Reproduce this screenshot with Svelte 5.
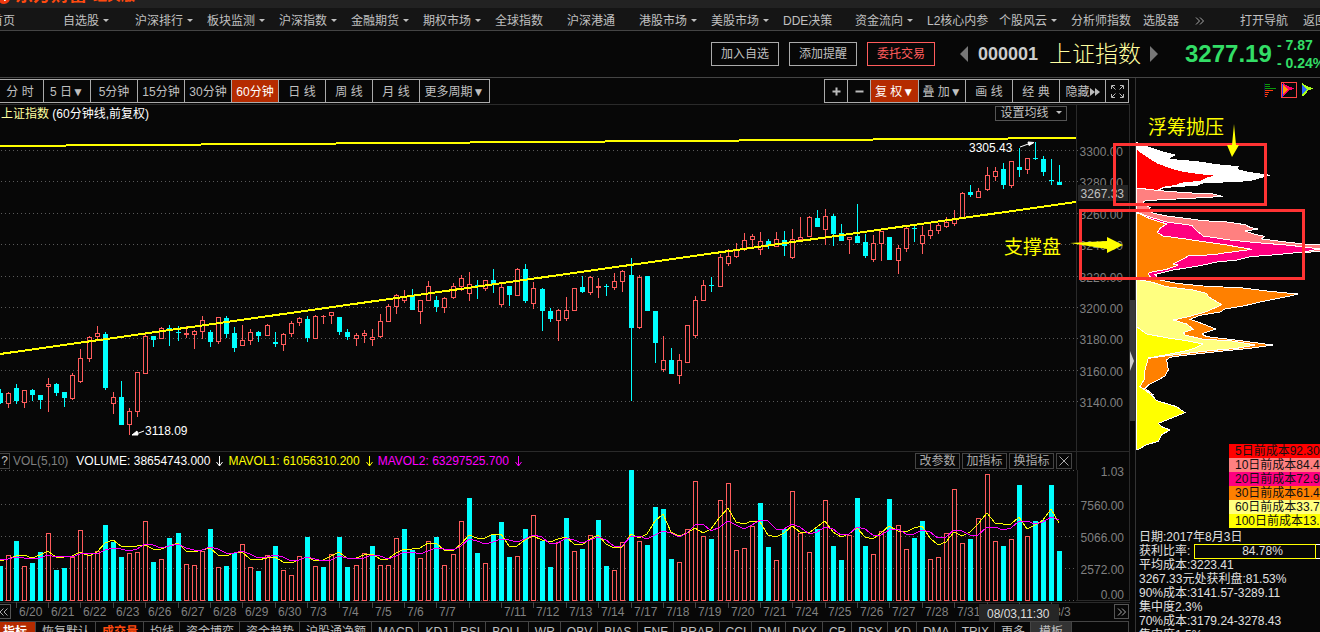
<script lang="ts">
  type Candle = { x: number; up: boolean; high: number; top: number; bottom: number; low: number; vol: number };

  const BASELINE = 601;

  const menu = [
    { label: "自选股", arrow: true },
    { label: "沪深排行", arrow: true },
    { label: "板块监测", arrow: true },
    { label: "沪深指数", arrow: true },
    { label: "金融期货", arrow: true },
    { label: "期权市场", arrow: true },
    { label: "全球指数" },
    { label: "沪深港通" },
    { label: "港股市场", arrow: true },
    { label: "美股市场", arrow: true },
    { label: "DDE决策" },
    { label: "资金流向", arrow: true },
    { label: "L2核心内参" },
    { label: "个股风云", arrow: true },
    { label: "分析师指数" }
  ];

  const periods = ["分 时", "5 日▼", "5分钟", "15分钟", "30分钟", "60分钟", "日 线", "周 线", "月 线"];
  const indicators = [
    "恢复默认", "成交量", "均线", "资金博弈", "资金趋势", "沪股通净额", "MACD", "KDJ", "RSI", "BOLL", "WR", "OBV",
    "BIAS", "ENE", "BRAR", "CCI", "DMI", "DKX", "CR", "PSY", "KD", "DMA", "TRIX", "更多", "模板"
  ];

  let period = $state("60分钟");
  let indicator = $state("成交量");

  // direction, high, body top, body bottom, low, volume top
  const rows = `d 389 393 403 404 566|u 392 393 404 408 555|d 384 388 401 404 541|u 390 390 403 408 566
d 389 390 395 401 563|d 395 395 400 409 552|u 378 384 387 412 533|d 383 384 393 396 570
d 392 392 398 407 568|u 373 375 399 400 557|u 349 358 382 383 530|u 336 337 359 362 553
u 326 333 337 340 551|d 332 334 388 390 525|u 392 397 404 414 542|d 381 397 425 425 557
u 408 411 425 435 553|u 372 372 412 417 552|u 332 336 374 374 521|d 336 336 340 347 562
u 327 328 339 339 559|d 325 328 329 346 538|d 326 332 333 341 533|u 326 333 335 338 564
u 330 331 335 349 565|u 316 320 332 339 551|d 330 332 342 347 529|u 317 317 342 344 567
d 316 318 334 338 566|d 327 333 348 352 553|u 325 340 346 346 544|u 329 332 341 345 567
d 331 332 336 342 571|u 324 325 336 336 555|d 332 342 344 347 546|u 333 334 345 351 570
u 321 323 334 337 575|u 317 318 323 326 556|d 316 319 338 342 537|u 315 316 339 339 566
u 315 316 317 324 567|u 312 312 316 324 554|d 317 317 332 335 537|d 329 332 337 340 567
u 333 335 339 346 565|u 330 333 336 343 553|u 329 337 340 346 546|u 314 321 337 338 565
u 304 306 322 322 565|u 294 295 307 314 538|u 290 296 301 303 529|d 289 296 310 310 550
u 300 300 312 324 558|u 281 286 301 301 541|d 296 300 307 312 537|u 297 298 308 313 565
u 283 286 298 299 554|u 275 278 287 291 521|u 272 284 294 301 498|d 280 285 286 299 553
u 280 280 289 291 563|d 269 280 285 293 534|u 283 287 305 307 522|d 286 286 295 306 557
u 268 269 296 296 556|d 264 269 301 303 529|u 282 288 304 309 515|d 288 289 311 331 541
d 308 311 319 322 567|u 309 310 321 341 542|u 297 310 319 321 518|u 288 288 311 311 551
d 276 287 292 293 549|u 276 277 293 295 535|u 278 286 288 298 520|d 284 286 287 296 566
u 273 281 288 290 570|u 270 271 282 292 542|d 258 275 328 401 470|u 275 277 328 329 541
d 276 276 311 311 545|d 311 311 343 363 507|u 336 360 370 372 509|d 348 360 374 374 559
u 354 360 376 384 562|u 325 325 363 363 529|u 296 300 336 338 481|u 280 285 301 301 536
d 277 285 286 292 539|u 254 257 287 287 500|u 249 256 264 266 483|u 243 250 257 258 550
u 233 240 250 251 548|u 234 236 240 247 526|u 232 241 250 255 503|d 239 241 245 249 547
u 232 239 247 247 560|d 231 240 246 256 529|u 229 239 258 259 491|u 217 237 240 240 533
u 216 217 237 237 552|d 210 218 227 227 529|u 209 216 230 245 500|d 214 216 234 246 546
d 224 233 241 241 560|u 237 237 240 254 535|d 204 236 243 243 498|d 234 242 256 258 546
u 235 243 260 262 554|u 231 231 244 261 531|d 237 237 260 260 499|u 245 248 261 274 525
u 226 228 249 252 549|d 225 228 229 242 538|u 226 235 244 254 521|u 223 230 236 239 559
u 223 225 231 234 557|u 217 222 227 228 533|u 210 219 224 226 489|u 192 193 218 218 543
d 185 192 195 197 539|u 188 191 198 198 518|u 167 175 190 191 474|u 167 171 177 181 541
d 163 169 185 189 546|u 161 161 186 188 539|d 148 167 170 177 485|u 158 158 170 174 536
d 142 158 159 160 521|d 156 159 172 176 520|d 159 180 181 185 485|d 165 182 185 185 551`;

  // bars that closed up on the candle but count as selling volume
  const sellVolume = new Set([14, 40, 46, 50, 58, 62, 70, 74, 82, 94, 114]);

  const candles: Candle[] = rows.split(/[|\n]/).map((row, i) => {
    const [dir, high, top, bottom, low, vol] = row.trim().split(" ");
    return { x: Math.floor(8.0897 * i + 0.06), up: dir === "u", high: +high, top: +top, bottom: +bottom, low: +low, vol: +vol };
  });

  // bars left of the visible range, needed by the moving averages
  const history = [44, 44, 44, 44, 44, 36, 47, 28, 54];

  function average(span: number) {
    const all = [...history, ...candles.map((c) => BASELINE - c.vol)];
    return candles
      .map((c, i) => {
        const end = i + history.length + 1;
        const sum = all.slice(end - span, end).reduce((a, b) => a + b, 0);
        return `${c.x},${Math.round(BASELINE - sum / span)}`;
      })
      .join(" ");
  }

  const ma5 = average(5);
  const ma10 = average(10);

  const priceAxis = [
    [150, "3300.00"], [181, "3280.00"], [213, "3260.00"], [244, "3240.00"], [276, "3220.00"],
    [307, "3200.00"], [338, "3180.00"], [370, "3160.00"], [401, "3140.00"]
  ] as const;
  const volAxis = [[471, "1.03"], [505, "7560.00"], [537, "5066.00"], [569, "2572.00"], [594, "0.00"]] as const;
  const volGrid = [470, 504, 536, 568, 600];

  const dates = [
    "6/20", "6/21", "6/22", "6/23", "6/26", "6/27", "6/28", "6/29", "6/30", "7/3", "7/4", "7/5", "7/6", "7/7", "",
    "7/11", "7/12", "7/13", "7/14", "7/17", "7/18", "7/19", "7/20", "7/21", "7/24", "7/25", "7/26", "7/27", "7/28",
    "7/31", "", "", "8/3"
  ].map((label, i) => ({ label, x: candles[2 + i * 4].x }));

  const costs = [
    { text: "5日前成本92.30%", color: "#ff0000" },
    { text: "10日前成本84.40%", color: "#ff8080" },
    { text: "20日前成本72.93%", color: "#ff0080" },
    { text: "30日前成本61.49%", color: "#ff8000" },
    { text: "60日前成本33.70%", color: "#ffff80" },
    { text: "100日前成本13.91%", color: "#ffff00" }
  ];

  const chips = [
    { color: "#ffffff", points: "200,38 215,42 235,52 262,60 285,68 316,75 300,82 298,88 380,95 440,104 505,110 500,118 540,128 600,136 575,142 540,152 460,156 400,158 380,166 310,170 280,174 265,180 200,180" },
    { color: "#ff0000", points: "200,58 225,75 260,98 305,115 330,122 380,130 440,136 415,143 390,154 330,160 320,166 280,172 265,180 200,180" },
    { color: "#ff8080", points: "200,174 270,182 345,188 430,192 458,199 400,203 320,207 240,211 220,214 225,225 240,233 235,240 250,250 290,258 340,264 400,272 470,276 525,284 540,292 565,297 525,303 555,313 583,319 575,327 640,335 700,342 770,346 770,362 700,368 200,380" },
    { color: "#ff0080", points: "200,246 230,258 290,276 365,286 380,302 400,318 480,330 560,338 660,346 750,357 700,366 620,374 540,380 500,390 440,396 400,405 360,412 310,420 270,430 255,433 262,442 200,446" },
    { color: "#ff8000", points: "200,248 240,266 290,282 270,295 262,308 280,318 340,326 400,335 470,345 545,358 470,368 430,374 355,378 330,392 310,402 325,405 290,418 250,425 235,430 240,440 270,450 320,460 400,468 520,474 590,483 683,492 660,498 600,510 570,516 520,528 460,538 455,545 390,556 360,568 400,582 437,597 410,606 395,612 410,620 480,628 540,636 608,645 540,655 450,664 350,675 300,682 290,690 295,720 285,738 255,755 235,765 225,775 250,795 200,800" },
    { color: "#ffff80", points: "200,448 240,455 290,470 370,480 410,490 415,500 455,524 410,545 355,560 310,570 350,582 370,598 340,608 345,615 400,628 480,632 556,645 500,655 420,662 350,670 270,680 230,686 200,700" },
    { color: "#ffff00", points: "200,590 230,612 300,625 350,632 398,642 380,652 350,662 290,674 235,684 225,720 222,750 210,770 225,780 245,795 260,812 320,830 345,848 310,862 265,880 275,890 300,900 275,914 265,934 230,944 205,958 200,958" }
  ];

  const stats = ["平均成本:3223.41", "3267.33元处获利盘:81.53%", "90%成本:3141.57-3289.11", "集中度2.3%", "70%成本:3179.24-3278.43", "集中度1.5%"];

  function isVolUp(candle: Candle, index: number) {
    return candle.up && !sellVolume.has(index);
  }
</script>

{#snippet downArrow(color: string)}
  <svg class="down" width="8" height="12" viewBox="0 0 8 12" stroke={color} fill="none"><path d="M4.5 1v10M1.5 7l3 4 3-4" /></svg>
{/snippet}

<div class="app">
  <div class="titlebar">
    <svg width="11" height="8" viewBox="0 0 11 8"><circle cx="4" cy="-2" r="6" fill="#f03a10" /><path d="M4 -3l2 4h-2z" fill="#fff" /></svg>
    <b>东方财富</b><b class="edition">经典版</b>
  </div>

  <nav class="menu">
    <a class="home" href="#home">首页</a>
    {#each menu as item}
      <a class="entry" href="#menu">{item.label}{#if item.arrow}<i class="caret"></i>{/if}</a>
    {/each}
    <a class="picker" href="#picker">选股器</a>
    <a class="more" href="#more" aria-label="更多">
      <svg width="10" height="8" viewBox="0 0 10 8" fill="none" stroke="#aaa"><path d="M1 0.5l3.5 3.5L1 7.5M5 0.5l3.5 3.5L5 7.5" /></svg>
    </a>
    <a class="guide" href="#guide">打开导航</a>
    <a href="#back">返回</a>
  </nav>

  <header class="quote">
    <button class="action">加入自选</button>
    <button class="action">添加提醒</button>
    <button class="action trade">委托交易</button>
    <button class="step" aria-label="上一个"><svg width="8" height="16" viewBox="0 0 8 16"><path d="M8 0v16L0 8z" fill="#777" /></svg></button>
    <span class="code">000001</span>
    <span class="name">上证指数</span>
    <button class="step" aria-label="下一个"><svg width="8" height="16" viewBox="0 0 8 16"><path d="M0 0v16l8-8z" fill="#777" /></svg></button>
    <span class="price">3277.19</span>
    <span class="change"><span>- 7.87</span><span>- 0.24%</span></span>
  </header>

  <main class="body">
    <section class="charts">
      <div class="toolbar">
        <div class="group periods">
          {#each periods as item}
            <button class:active={period === item} onclick={() => (period = item)}>{item}</button>
          {/each}
          <button class="wide">更多周期▼</button>
        </div>
        <div class="group tools">
          <button class="small" aria-label="放大"><svg width="9" height="9" viewBox="0 0 9 9"><path d="M0.5 4.5h8M4.5 0.5v8" stroke="#bbb" stroke-width="2" /></svg></button>
          <button class="small" aria-label="缩小"><svg width="9" height="9" viewBox="0 0 9 9"><path d="M0.5 4.5h8" stroke="#bbb" stroke-width="2" /></svg></button>
          <button class="active adjust">复 权▼</button>
          <button>叠 加▼</button>
          <button>画 线</button>
          <button>经 典</button>
          <button class="hide">隐藏<svg width="10" height="8" viewBox="0 0 10 8"><path d="M0 0l5 4-5 4zM5 0l5 4-5 4z" fill="#bbb" /></svg></button>
          <button class="full" aria-label="全屏"><svg width="13" height="13" viewBox="0 0 13 13" fill="none" stroke="#bbb"><path d="M0.5 4V0.5H4M9 0.5h3.5V4M12.5 9v3.5H9M4 12.5H0.5V9M1 1l3.5 3.5M12 1L8.5 4.5M12 12L8.5 8.5M1 12l3.5-3.5" /></svg></button>
        </div>
      </div>

      <div class="caption">
        <div class="caption-main">
          <span><span class="index-name">上证指数</span> (60分钟线,前复权)</span>
          <button class="ma">设置均线<i class="caret"></i></button>
        </div>
        <div class="gutter"></div>
      </div>

      <svg class="plot" viewBox="0 122 1130 329" role="img" aria-label="60分钟K线图">
        <g shape-rendering="crispEdges">
          <path d="M1076.5 122v329M1129.5 122v329" stroke="#2a2a2a" />
          {#each priceAxis as [y]}
            <path d="M1 {y + 0.5}H1078" stroke="#5a5a5a" stroke-dasharray="1 3" />
          {/each}
          {#each candles as c}
            <rect x={c.x} y={c.high} width="1" height={c.low - c.high} fill={c.up ? "#ff5c5c" : "#00ffff"} />
            <rect x={c.x - 2} y={c.top} width="5" height={c.bottom - c.top} fill={c.up ? "#ff5c5c" : "#00ffff"} />
            {#if c.up && c.bottom - c.top > 2}
              <rect x={c.x - 1} y={c.top + 1} width="3" height={c.bottom - c.top - 2} fill="#070707" />
            {/if}
          {/each}
          <path d="M0 146L1076 138M0 354L1076 202" stroke="#ffff00" stroke-width="2" fill="none" />
        </g>
        <g class="mark">
          <text x="969" y="152">3305.43</text>
          <text x="145" y="435">3118.09</text>
          <path d="M1020 147l11-4M1028 142l6 0.5-5 3zM144 431l-8 3M132 435l5-4 1 4z" fill="#fff" stroke="#fff" />
        </g>
        <g class="axis">
          {#each priceAxis as [y, label]}
            <text x="1123" y={y + 6}>{label}</text>
          {/each}
          <rect x="1078" y="185" width="50" height="16" fill="#242424" />
          <text class="current" x="1124" y="198">3267.33</text>
        </g>
      </svg>

      <div class="caption vol">
        <div class="caption-main">
          <span class="values">
            <button class="help" aria-label="说明">?</button>
            <span class="formula">VOL(5,10)</span>
            <span>VOLUME: 38654743.000</span>{@render downArrow("#fff")}
            <span class="mavol1">MAVOL1: 61056310.200</span>{@render downArrow("#ff0")}
            <span class="mavol2">MAVOL2: 63297525.700</span>{@render downArrow("#f0f")}
          </span>
          <span class="vol-actions">
            <button>改参数</button><button>加指标</button><button>换指标</button>
            <button class="close" aria-label="关闭"><svg width="10" height="10" viewBox="0 0 10 10" stroke="#aaa"><path d="M0.5 0.5l9 9M9.5 0.5l-9 9" /></svg></button>
          </span>
        </div>
        <div class="gutter"></div>
      </div>

      <div class="volume-area">
        <svg class="plot" viewBox="0 470 1130 151" role="img" aria-label="成交量">
          <g shape-rendering="crispEdges">
            <path d="M1077 470v131M1129.5 470v131M1076 600.5h54" stroke="#2a2a2a" />
            <path d="M0 602.5h1130" stroke="#2a2a2a" />
            {#each volGrid as y}
              <path d="M1 {y + 0.5}H1076" stroke="#5a5a5a" stroke-dasharray="1 3" />
            {/each}
            {#each candles as c, i}
              <rect x={c.x - 2} y={c.vol} width="5" height={BASELINE - c.vol} fill={isVolUp(c, i) ? "#ff5c5c" : "#00ffff"} />
              {#if isVolUp(c, i)}
                <rect x={c.x - 1} y={c.vol + 1} width="3" height={BASELINE - c.vol - 2} fill="#070707" />
              {/if}
            {/each}
            {#each dates as date}
              <path d="M{date.x + 0.5} 602v6" stroke="#444" />
            {/each}
            <polyline points={ma5} fill="none" stroke="#ffff00" />
            <polyline points={ma10} fill="none" stroke="#ff00ff" />
          </g>
          <g class="axis">
            {#each volAxis as [y, label]}
              <text x="1124" y={y + 5}>{label}</text>
            {/each}
          </g>
          <g class="dates">
            {#each dates as date}
              <text x={date.x + 3} y="616">{date.label}</text>
            {/each}
            <rect x="979" y="604" width="80" height="17" fill="#262626" />
            <text class="cursor" x="987" y="618">08/03,11:30</text>
          </g>
        </svg>
        <button class="page older" aria-label="向前"><svg width="10" height="8" viewBox="0 0 10 8" fill="none" stroke="#aaa"><path d="M4.5 0.5L1 4l3.5 3.5M8.5 0.5L5 4l3.5 3.5" /></svg></button>
        <button class="page newer" aria-label="向后"><svg width="10" height="8" viewBox="0 0 10 8" fill="none" stroke="#aaa"><path d="M1 0.5L4.5 4 1 7.5M5 0.5L8.5 4 5 7.5" /></svg></button>
      </div>

      <div class="tabs">
        <button class="lead">指标</button>
        {#each indicators as item}
          <button class:selected={indicator === item} class:template={item === "模板"} onclick={() => (indicator = item)}>{item}</button>
        {/each}
      </div>
    </section>

    <div class="splitter"><div class="handle"><svg width="4" height="20" viewBox="0 0 4 20"><path d="M0 0l4 10-4 10z" fill="#ccc" /></svg></div></div>

    <aside class="chips">
      <div class="modes">
        <svg width="12" height="16" viewBox="0 0 12 16" shape-rendering="crispEdges">
          <path d="M1 2h5v1H1zM1 4h5v1H1zM1 6h11v1H1z" fill="#0a9a0a" />
          <path d="M1 8h8v1H1zM1 10h4v1H1zM1 12h3v1H1zM1 14h2v1H1z" fill="#ff3a10" />
          <path d="M0 1h1v14H0z" fill="#101040" />
        </svg>
        <svg width="16" height="16" viewBox="0 0 16 16" shape-rendering="crispEdges">
          <rect x="0.5" y="0.5" width="15" height="15" fill="none" stroke="#ff4444" />
          <path d="M2 1l5 3 6 2.5-5 2L2 15z" fill="#ff0066" />
          <path d="M2 3l5 4-5 5z" fill="#ff9a00" />
          <path d="M1 2h1v13H1z" fill="#2040ff" />
        </svg>
        <svg width="12" height="16" viewBox="0 0 12 16" shape-rendering="crispEdges">
          <path d="M0 1l5 3 6 2.5-5 2-3 4-3 2z" fill="#a8ff20" />
          <path d="M0 3l5 4-5 5z" fill="#2a6bff" />
        </svg>
      </div>
      <svg class="distribution" viewBox="198 0 552 942" preserveAspectRatio="xMinYMin meet" role="img" aria-label="筹码分布">
        <g shape-rendering="crispEdges" stroke="#fff" stroke-width="3">
          {#each chips as chip}
            <polygon points={chip.points} fill={chip.color} />
          {/each}
          <path d="M199.5 38v920" />
        </g>
      </svg>
      <ul class="costs">
        {#each costs as cost}
          <li style="background: {cost.color}">{cost.text}</li>
        {/each}
      </ul>
      <div class="stats">
        <p>日期:2017年8月3日</p>
        <div class="ratio"><span>获利比率:</span><div class="meter"><div class="gain">84.78%</div><div class="rest"></div></div></div>
        {#each stats as line}
          <p>{line}</p>
        {/each}
      </div>
    </aside>

    <svg class="notes" width="320" height="220" viewBox="1000 78 320 220" aria-hidden="true">
      <g fill="none" stroke="#ff3333" stroke-width="3">
        <rect x="1114.5" y="144.5" width="151" height="60" />
        <rect x="1080.5" y="210.5" width="223" height="68" />
      </g>
      <g fill="#ffff00">
        <path d="M1234 124l2 21h3l-7 12-5-12h5zM1070 243l37-2v-4l16 8-16 8v-4z" />
        <text x="1148" y="134">浮筹抛压</text>
        <text x="1004" y="254">支撑盘</text>
      </g>
    </svg>
  </main>
</div>

<style>
:global(body) {
  margin: 0;
  background: #070707;
  overflow: hidden;
}

.app {
  height: 100vh;
  overflow: hidden;
  background: #070707;
  color: #c0c0c0;
  font-family: "Liberation Sans", "Noto Sans CJK SC", sans-serif;
  font-size: 12px;
  line-height: 14px;
}

button {
  box-sizing: border-box;
  margin: 0;
  padding: 0;
  border: 0;
  background: transparent;
  color: inherit;
  font: inherit;
  white-space: nowrap;
  cursor: pointer;
}

a {
  color: inherit;
  text-decoration: none;
}

svg {
  flex: none;
}

.titlebar {
  display: flex;
  align-items: flex-end;
  height: 8px;
  background: #222;
  overflow: hidden;
}

.titlebar b {
  margin: 0 6px 4px 4px;
  color: #ff4a10;
  font-size: 18px;
  line-height: 18px;
}

.titlebar .edition {
  margin-left: 0;
  font-size: 14px;
}

.menu {
  display: flex;
  align-items: center;
  height: 19px;
  padding-top: 3px;
  background: #151515;
  border-bottom: 1px solid #444;
  white-space: nowrap;
}

.menu a {
  flex: none;
}

.menu .home {
  width: 72px;
  margin-left: -9px;
}

.menu .entry {
  width: 72px;
}

.menu .picker {
  width: 52px;
}

.menu .more {
  width: 45px;
}

.menu .guide {
  width: 63px;
}

.caret {
  display: inline-block;
  margin-left: 4px;
  vertical-align: 3px;
  border: 3px solid transparent;
  border-top-color: currentColor;
  border-bottom-width: 0;
}

.quote {
  display: flex;
  align-items: center;
  justify-content: flex-end;
  height: 46px;
  border-bottom: 1px solid #444;
  white-space: nowrap;
}

.action {
  width: 68px;
  height: 24px;
  margin-right: 10px;
  border: 1px solid #aaa;
}

.action.trade {
  margin-right: 25px;
  border-color: #ff5c5c;
  color: #ff5c5c;
}

.step {
  display: flex;
}

.code {
  margin: 0 11px 0 10px;
  color: #ccc;
  font-size: 18px;
  font-weight: 700;
}

.name {
  margin-right: 9px;
  color: #ffffa0;
  font-size: 23px;
  font-weight: 300;
  line-height: 28px;
}

.price {
  width: 92px;
  margin-left: 27px;
  color: #33dd66;
  font-size: 24px;
  font-weight: 700;
}

.change {
  display: flex;
  flex-direction: column;
  width: 43px;
  color: #33dd66;
  font-size: 14px;
  font-weight: 700;
  line-height: 18px;
}

.body {
  position: relative;
  display: grid;
  grid-template-columns: minmax(0, 1fr) 5px 185px;
}

.toolbar {
  display: flex;
  justify-content: space-between;
  height: 25px;
  padding: 1px 1px 0 0;
  border-bottom: 1px solid #2a2a2a;
}

.group {
  display: flex;
  height: 24px;
  box-sizing: border-box;
  border: 1px solid #aaa;
}

.group button {
  display: flex;
  align-items: center;
  justify-content: center;
  width: 47px;
  padding-top: 1px;
  border-right: 1px solid #aaa;
}

.group button:last-child {
  border-right: 0;
}

.periods {
  margin-left: -4px;
}

.group .wide {
  width: 69px;
}

.group .small {
  width: 23px;
}

.group .adjust {
  width: 48px;
}

.group .hide {
  width: 46px;
}

.group .full {
  width: 22px;
}

.group .active {
  background: #b52b00;
  color: #fff;
}

.caption {
  display: flex;
  height: 17px;
}

.caption-main {
  display: flex;
  flex: 1;
  align-items: center;
  justify-content: space-between;
  padding: 0 9px 0 1px;
  color: #fff;
  white-space: nowrap;
}

.index-name {
  color: #ffffa0;
}

.gutter {
  width: 54px;
  box-sizing: border-box;
  border: solid #2a2a2a;
  border-width: 0 1px;
}

.ma {
  width: 72px;
  height: 15px;
  border: 1px solid #555;
  color: #c0c0c0;
  line-height: 13px;
}

.ma .caret {
  margin-left: 7px;
}

.plot {
  display: block;
  width: 100%;
  overflow: visible;
}

.axis text {
  fill: #808080;
  text-anchor: end;
}

.axis .current {
  fill: #c0c0c0;
}

.mark text {
  fill: #fff;
}

.dates text {
  fill: #808080;
}

.dates .cursor {
  fill: #ddd;
}

.caption.vol {
  height: 18px;
  border-top: 1px solid #2a2a2a;
}

.vol .caption-main {
  padding: 0 4px 0 0;
}

.values {
  display: flex;
  align-items: center;
}

.help {
  width: 10px;
  height: 16px;
  margin-right: 3px;
  border: 1px solid #444;
  border-left: 0;
  color: #c0c0c0;
}

.formula {
  margin-right: 8px;
  color: #808080;
}

.down {
  margin: 0 5px;
}

.mavol1 {
  color: #ffff00;
}

.mavol2 {
  color: #ff00ff;
}

.vol-actions {
  display: flex;
  gap: 2px;
  color: #aaa;
}

.vol-actions button {
  width: 45px;
  height: 16px;
  border: 1px solid #444;
}

.vol-actions .close {
  display: flex;
  align-items: center;
  justify-content: center;
  width: 16px;
}

.volume-area {
  position: relative;
}

.page {
  position: absolute;
  bottom: 2px;
  display: flex;
  align-items: center;
  justify-content: center;
  width: 15px;
  height: 15px;
  border: 1px solid #555;
  background: #070707;
}

.page.older {
  left: -4px;
}

.page.newer {
  right: 1px;
}

.tabs {
  display: flex;
  height: 20px;
  margin-right: 1px;
  border-top: 1px solid #444;
  border-right: 1px solid #444;
  overflow: hidden;
}

.tabs button {
  flex: none;
  padding: 0 5px 0 6px;
  border-right: 1px solid #444;
  line-height: 16px;
}

.tabs .lead {
  padding-left: 3px;
  padding-right: 8px;
  background: #b52b00;
  color: #fff;
  font-weight: 700;
}

.tabs .selected {
  color: #ff4a10;
  font-weight: 700;
}

.tabs .template {
  padding: 0 8px;
  background: #333;
}

.splitter {
  padding-top: 222px;
}

.handle {
  display: flex;
  align-items: center;
  height: 121px;
  background: #3a3a3a;
}

.chips {
  min-width: 0;
  border-left: 1px solid #333;
  background: #070707;
  overflow: hidden;
}

.modes {
  display: flex;
  align-items: flex-start;
  justify-content: flex-end;
  gap: 5px;
  height: 48px;
  padding: 4px 6px 0 0;
}

.distribution {
  display: block;
  width: 184px;
  height: 314px;
  overflow: visible;
}

.costs {
  position: relative;
  margin: 0 0 2px 93px;
  padding: 0;
  list-style: none;
  color: #111;
  white-space: nowrap;
}

.costs li {
  height: 14px;
  padding-left: 6px;
}

.stats {
  padding-left: 3px;
  color: #e0e0e0;
  white-space: nowrap;
}

.stats p {
  margin: 0;
}

.ratio {
  display: flex;
  justify-content: space-between;
  height: 14px;
}

.meter {
  display: flex;
  width: 126px;
  height: 15px;
}

.gain {
  width: 122px;
  box-sizing: border-box;
  padding-left: 15px;
  border: 1px solid #ffff00;
  text-align: center;
  line-height: 13px;
}

.rest {
  flex: 1;
  border: solid #fff;
  border-width: 1px 0;
}

.notes {
  position: absolute;
  top: 0;
  right: 0;
  pointer-events: none;
}

.notes text {
  font-size: 19px;
}
</style>
